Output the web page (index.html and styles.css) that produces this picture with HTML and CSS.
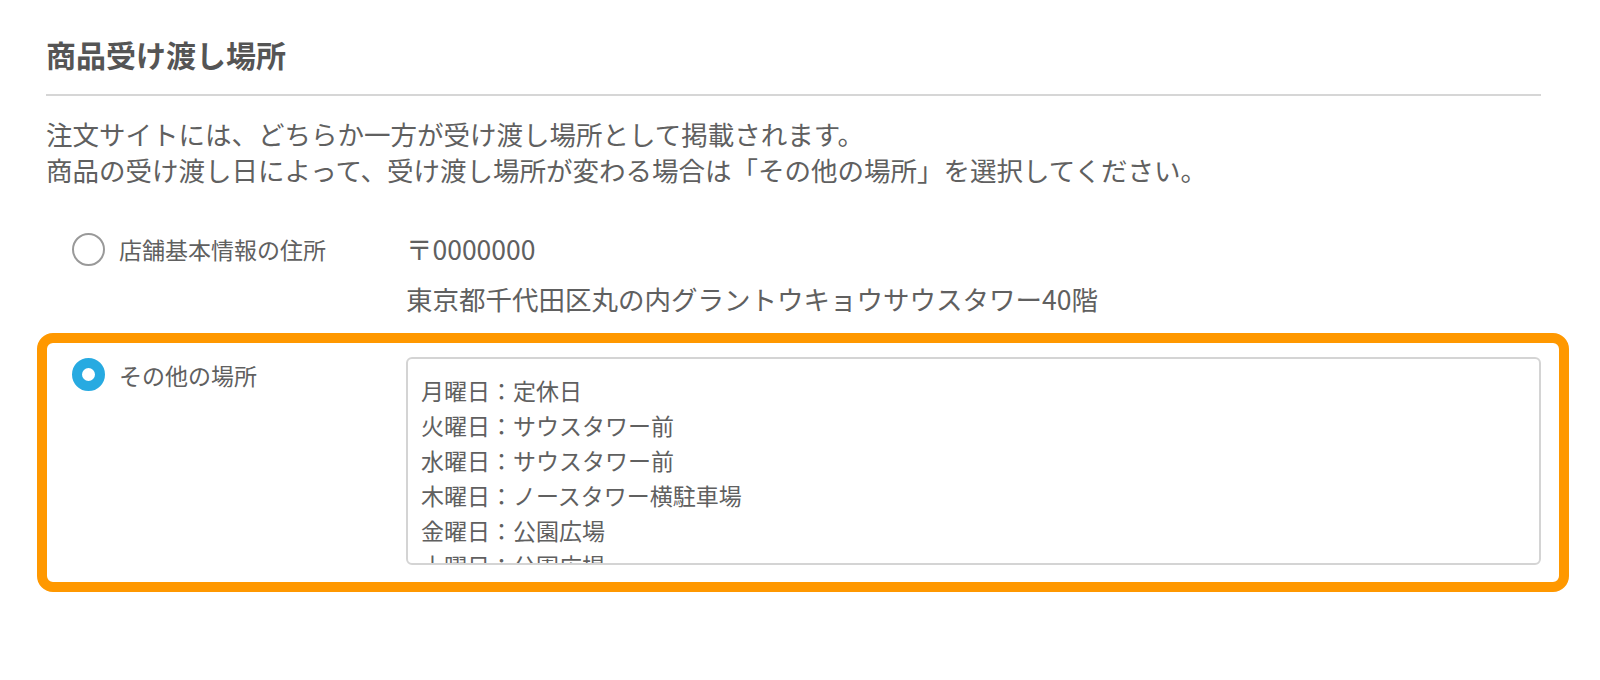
FILE: index.html
```html
<!DOCTYPE html>
<html lang="ja">
<head>
  <meta charset="UTF-8" />
  <meta name="viewport" content="width=device-width, initial-scale=1.0"/>
  <title>商品受け渡し場所</title>
  <link rel="stylesheet" href="styles.css">
</head>
<body>

  <section class="pickup">
    <h2 class="pickup-title">商品受け渡し場所</h2>

    <div class="pickup-note">
      <p>注文サイトには、どちらか一方が受け渡し場所として掲載されます。</p>
      <p>商品の受け渡し日によって、受け渡し場所が変わる場合は「その他の場所」を選択してください。</p>
    </div>

    <!-- 店舗の住所 -->
    <div class="option">
      <label class="option-head">
        <input type="radio" name="pickup" class="radio">
        <span>店舗基本情報の住所</span>
      </label>
      <div class="address">
        <p>〒0000000</p>
        <p>東京都千代田区丸の内グラントウキョウサウスタワー40階</p>
      </div>
    </div>

    <!-- その他の場所 -->
    <div class="option option--other">
      <label class="option-head">
        <input type="radio" name="pickup" class="radio" checked>
        <span>その他の場所</span>
      </label>
      <textarea class="place-text">月曜日：定休日
火曜日：サウスタワー前
水曜日：サウスタワー前
木曜日：ノースタワー横駐車場
金曜日：公園広場
土曜日：公園広場
日曜日：公園広場</textarea>
    </div>
  </section>

</body>
</html>
```

FILE: styles.css
```css
:root {
  --texto: #606060;
  --gris-borde: #d4d4d4;
  --gris-radio: #999;
  --azul: #27aae1;
  --naranja: #ff9800;
  --fuente-base: "Noto Sans CJK JP", "Noto Sans", sans-serif;
}
* { box-sizing: border-box; margin: 0; padding: 0; }
body {
  font-family: var(--fuente-base);
  background: #fff;
  color: var(--texto);
}

.pickup {
  padding: 33px 59px 40px 46px;
}
.pickup-title {
  font-size: 30px;
  line-height: 42px;
  font-weight: 700;
  color: #555;
  padding-bottom: 19px;
  border-bottom: 2px solid #d6d6d6;
}
.pickup-note {
  margin-top: 20px;
  font-size: 26.5px;
  line-height: 36px;
}

/* Opciones */
.option {
  display: grid;
  grid-template-columns: 334px 1fr;
  align-items: start;
  margin-top: 36px;
  padding-left: 26px;
}
.option-head {
  display: flex;
  align-items: center;
  gap: 14px;
  height: 50px;
  font-size: 23px;
  cursor: pointer;
}
.address p {
  font-size: 26.5px;
  line-height: 50px;
}

.radio {
  appearance: none;
  width: 33px;
  height: 33px;
  border: 2px solid var(--gris-radio);
  border-radius: 50%;
  background: #fff;
  flex-shrink: 0;
  cursor: pointer;
}
.radio:checked {
  border: 10px solid var(--azul);
}

/* Opción resaltada */
.option--other {
  margin: 9px -28px 0 -9px;
  padding: 14px 18px 17px 25px;
  border: 10px solid var(--naranja);
  border-radius: 16px;
}
.option--other .option-head {
  height: 35px;
}
.place-text {
  display: block;
  width: 100%;
  height: 208px;
  padding: 14px 13px;
  border: 2px solid var(--gris-borde);
  border-radius: 6px;
  font-family: var(--fuente-base);
  font-size: 23px;
  line-height: 35px;
  color: var(--texto);
  resize: none;
  overflow: hidden;
  outline: none;
}
```
